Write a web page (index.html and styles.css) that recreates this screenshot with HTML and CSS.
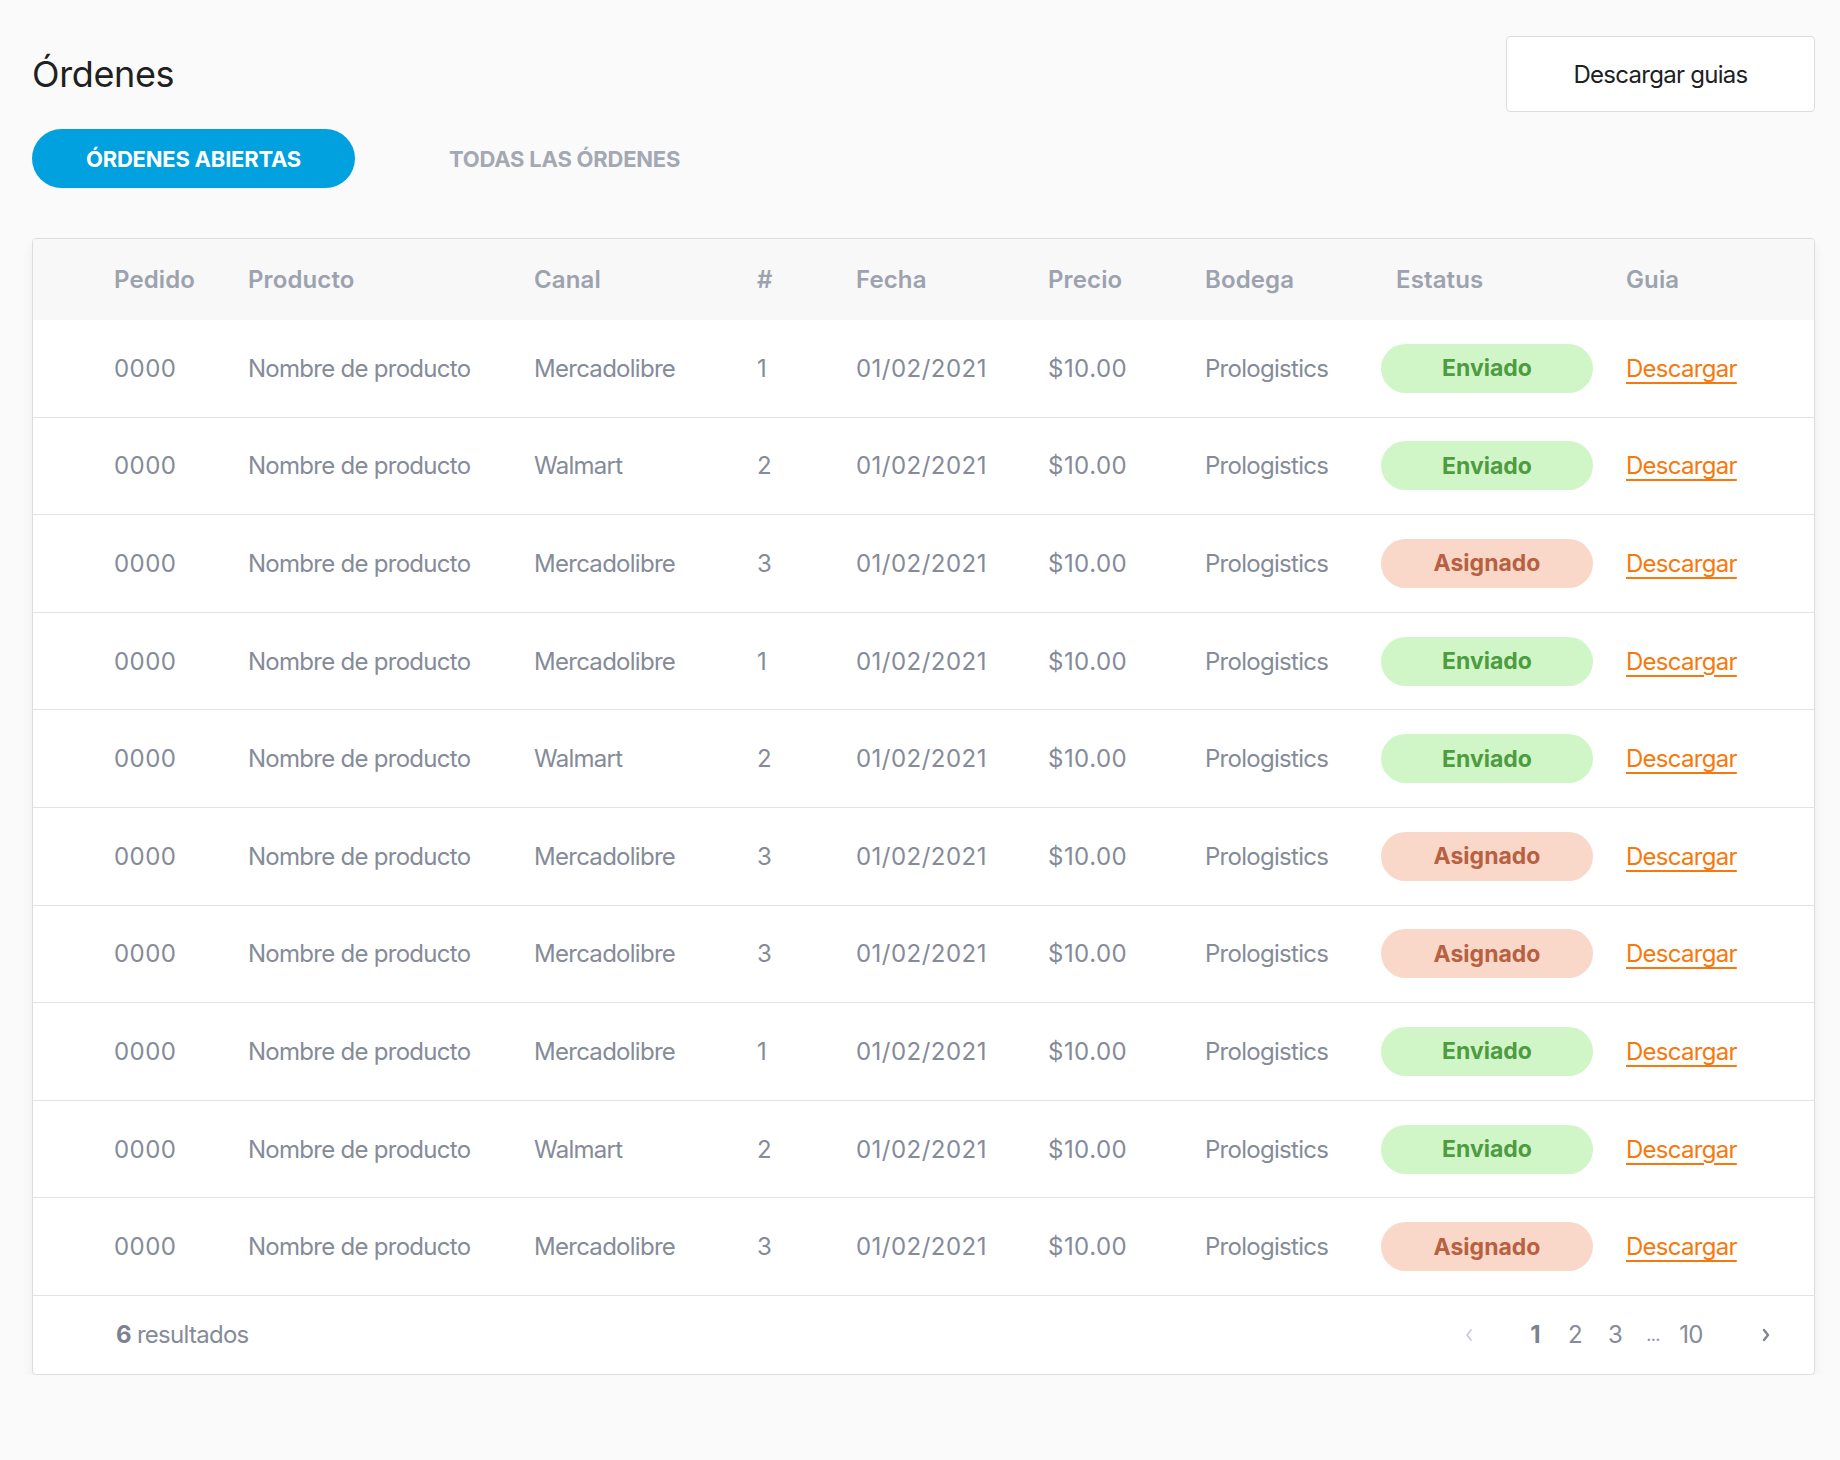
FILE: index.html
```html
<!DOCTYPE html>
<html lang="es">
<head>
<meta charset="utf-8">
<title>Órdenes</title>
<link rel="stylesheet" href="styles.css">
</head>
<body>
<main class="page">
  <header class="top">
    <h1 class="title">Órdenes</h1>
    <button class="btn-outline" type="button">Descargar guias</button>
  </header>

  <nav class="tabs">
    <a class="tab tab-active" href="#">ÓRDENES ABIERTAS</a>
    <a class="tab" href="#">TODAS LAS ÓRDENES</a>
  </nav>

  <section class="card">
    <div class="row head">
      <div class="c c1">Pedido</div>
      <div class="c">Producto</div>
      <div class="c">Canal</div>
      <div class="c">#</div>
      <div class="c">Fecha</div>
      <div class="c">Precio</div>
      <div class="c">Bodega</div>
      <div class="c c-status">Estatus</div>
      <div class="c">Guia</div>
    </div>

    <div class="row"><div class="c c1 num">0000</div><div class="c">Nombre de producto</div><div class="c">Mercadolibre</div><div class="c num">1</div><div class="c num">01/02/2021</div><div class="c num">$10.00</div><div class="c">Prologistics</div><div class="c"><span class="badge ok">Enviado</span></div><div class="c"><a class="link" href="#">Descargar</a></div></div>
    <div class="row"><div class="c c1 num">0000</div><div class="c">Nombre de producto</div><div class="c">Walmart</div><div class="c num">2</div><div class="c num">01/02/2021</div><div class="c num">$10.00</div><div class="c">Prologistics</div><div class="c"><span class="badge ok">Enviado</span></div><div class="c"><a class="link" href="#">Descargar</a></div></div>
    <div class="row"><div class="c c1 num">0000</div><div class="c">Nombre de producto</div><div class="c">Mercadolibre</div><div class="c num">3</div><div class="c num">01/02/2021</div><div class="c num">$10.00</div><div class="c">Prologistics</div><div class="c"><span class="badge warn">Asignado</span></div><div class="c"><a class="link" href="#">Descargar</a></div></div>
    <div class="row"><div class="c c1 num">0000</div><div class="c">Nombre de producto</div><div class="c">Mercadolibre</div><div class="c num">1</div><div class="c num">01/02/2021</div><div class="c num">$10.00</div><div class="c">Prologistics</div><div class="c"><span class="badge ok">Enviado</span></div><div class="c"><a class="link" href="#">Descargar</a></div></div>
    <div class="row"><div class="c c1 num">0000</div><div class="c">Nombre de producto</div><div class="c">Walmart</div><div class="c num">2</div><div class="c num">01/02/2021</div><div class="c num">$10.00</div><div class="c">Prologistics</div><div class="c"><span class="badge ok">Enviado</span></div><div class="c"><a class="link" href="#">Descargar</a></div></div>
    <div class="row"><div class="c c1 num">0000</div><div class="c">Nombre de producto</div><div class="c">Mercadolibre</div><div class="c num">3</div><div class="c num">01/02/2021</div><div class="c num">$10.00</div><div class="c">Prologistics</div><div class="c"><span class="badge warn">Asignado</span></div><div class="c"><a class="link" href="#">Descargar</a></div></div>
    <div class="row"><div class="c c1 num">0000</div><div class="c">Nombre de producto</div><div class="c">Mercadolibre</div><div class="c num">3</div><div class="c num">01/02/2021</div><div class="c num">$10.00</div><div class="c">Prologistics</div><div class="c"><span class="badge warn">Asignado</span></div><div class="c"><a class="link" href="#">Descargar</a></div></div>
    <div class="row"><div class="c c1 num">0000</div><div class="c">Nombre de producto</div><div class="c">Mercadolibre</div><div class="c num">1</div><div class="c num">01/02/2021</div><div class="c num">$10.00</div><div class="c">Prologistics</div><div class="c"><span class="badge ok">Enviado</span></div><div class="c"><a class="link" href="#">Descargar</a></div></div>
    <div class="row"><div class="c c1 num">0000</div><div class="c">Nombre de producto</div><div class="c">Walmart</div><div class="c num">2</div><div class="c num">01/02/2021</div><div class="c num">$10.00</div><div class="c">Prologistics</div><div class="c"><span class="badge ok">Enviado</span></div><div class="c"><a class="link" href="#">Descargar</a></div></div>
    <div class="row"><div class="c c1 num">0000</div><div class="c">Nombre de producto</div><div class="c">Mercadolibre</div><div class="c num">3</div><div class="c num">01/02/2021</div><div class="c num">$10.00</div><div class="c">Prologistics</div><div class="c"><span class="badge warn">Asignado</span></div><div class="c"><a class="link" href="#">Descargar</a></div></div>

    <footer class="foot">
      <div class="count"><b>6</b> resultados</div>
      <div class="pager">
        <span class="arrow prev"><svg width="10" height="16" viewBox="0 0 10 16"><polyline points="7,3 3,8 7,13" fill="none" stroke="#c8ccd3" stroke-width="1.8" stroke-linecap="round" stroke-linejoin="round"/></svg></span>
        <span class="pg pg-cur">1</span>
        <span class="pg">2</span>
        <span class="pg">3</span>
        <span class="dots">...</span>
        <span class="pg">10</span>
        <span class="arrow next"><svg width="10" height="16" viewBox="0 0 10 16"><polyline points="3,3 7,8 3,13" fill="none" stroke="#7f8592" stroke-width="2.4" stroke-linecap="round" stroke-linejoin="round"/></svg></span>
      </div>
    </footer>
  </section>
</main>
</body>
</html>
```

FILE: styles.css
```css
* { box-sizing: border-box; }

html, body {
  margin: 0;
  padding: 0;
  background: #fafafa;
}

body {
  font-family: "Inter", "Noto Sans", sans-serif;
  color: #858b98;
  -webkit-font-smoothing: antialiased;
}

.page {
  padding: 36px 25px 0 32px;
}

.top {
  display: flex;
  align-items: center;
  justify-content: space-between;
}

.title {
  margin: 0;
  font-size: 36px;
  font-weight: 400;
  letter-spacing: -0.01em;
  color: #1d211f;
}

.btn-outline {
  width: 309px;
  height: 76px;
  background: #fff;
  border: 1px solid #dcdcdc;
  border-radius: 4px;
  font-family: inherit;
  font-size: 24px;
  letter-spacing: -0.03em;
  color: #1d211f;
  cursor: pointer;
}

.tabs {
  display: flex;
  gap: 39px;
  margin-top: 17px;
}

.tab {
  display: flex;
  align-items: center;
  justify-content: center;
  height: 59px;
  padding: 0 55px;
  border-radius: 30px;
  font-size: 22px;
  font-weight: 700;
  letter-spacing: -0.01em;
  text-decoration: none;
  color: #a3a8b2;
}

.tab-active {
  width: 323px;
  padding: 0;
  background: #00a1de;
  color: #fff;
}

.card {
  margin-top: 50px;
  background: #fff;
  border: 1px solid #dddddd;
  border-radius: 4px;
  overflow: hidden;
  box-shadow: 0 6px 12px rgba(0, 0, 0, 0.05);
}

.row {
  display: grid;
  grid-template-columns: 215px 286px 223px 99px 192px 157px 176px 245px 1fr;
  align-items: center;
  height: 97.6px;
  border-bottom: 1px solid #e3e3e3;
  font-size: 24px;
  letter-spacing: -0.03em;
  white-space: nowrap;
}

.row.head {
  height: 81px;
  background: #f8f8f9;
  border-bottom: 0;
  font-weight: 600;
  letter-spacing: 0.005em;
  color: #9ca2ae;
}

.c1 { padding-left: 81px; }

.num { letter-spacing: 0.02em; }

.c-status { padding-left: 15px; }

.badge {
  display: flex;
  align-items: center;
  justify-content: center;
  width: 212px;
  height: 49px;
  border-radius: 25px;
  font-size: 23px;
  font-weight: 700;
  letter-spacing: 0;
}

.badge.ok {
  background: #d0f6c8;
  color: #4e9b40;
}

.badge.warn {
  background: #f9d8ca;
  color: #b8603f;
}

.link {
  color: #f7790d;
  text-decoration: underline;
  text-decoration-thickness: 2px;
  text-underline-offset: 5px;
}

.foot {
  display: flex;
  align-items: center;
  justify-content: space-between;
  height: 78px;
  padding: 0 43px 0 83px;
  font-size: 24px;
  letter-spacing: -0.03em;
}

.count b {
  font-weight: 700;
  color: #7c8290;
}

.pager {
  display: flex;
  align-items: center;
}

.arrow {
  display: flex;
  width: 10px;
  height: 16px;
}

.prev { margin-right: 41px; }
.next { margin-left: 50px; }

.pg {
  width: 40px;
  text-align: center;
}

.pg-cur {
  font-weight: 700;
  color: #7c8290;
}

.dots {
  width: 36px;
  text-align: center;
  font-size: 18px;
}
```
